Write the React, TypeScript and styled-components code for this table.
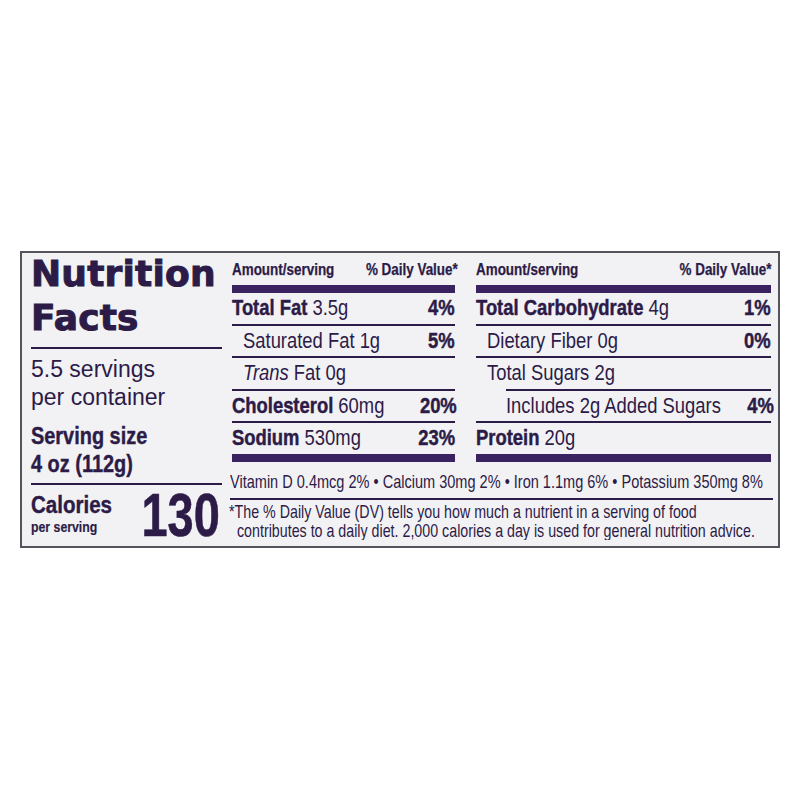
import React from "react";
import styled, { createGlobalStyle } from "styled-components";

const INK = "#2c1b47";
const BAR = "#3a2160";
const SANS = `"Liberation Sans", Arial, sans-serif`;
const HEAVY = `"DejaVu Sans", "Liberation Sans", Arial, sans-serif`;

const Global = createGlobalStyle`
  html, body { margin: 0; padding: 0; background: #ffffff; overflow: hidden; }
  body { font-family: ${SANS}; color: ${INK}; }
`;

const Page = styled.main`
  box-sizing: border-box;
  width: 800px;
  height: 800px;
  padding: 251px 0 0 20px;
`;

const Label = styled.section`
  box-sizing: border-box;
  width: 760px;
  height: 297px;
  border: 2px solid #55535c;
  background: #f2f2f5;
  display: grid;
  grid-template-columns: 191px minmax(0, 1fr);
  column-gap: 10px;
  padding: 0 5px 0 9px;
  overflow: hidden;
`;

/* horizontally condensed text (the label uses a condensed face) */
const Cond = styled.span<{ $k: number; $right?: boolean }>`
  display: inline-block;
  flex: 0 1 auto;
  min-width: 0;
  white-space: nowrap;
  transform: scaleX(${(p) => p.$k});
  transform-origin: ${(p) => (p.$right ? "right" : "left")} center;
`;

const Side = styled.div`
  display: flex;
  flex-direction: column;
  min-width: 0;
`;

const Title = styled.h1`
  margin: -1px 0 0;
  font-family: ${HEAVY};
  font-weight: 700;
  font-size: 36px;
  line-height: 44px;
  letter-spacing: 0.2px;
  color: ${INK};
  -webkit-text-stroke: 1px ${INK};
`;

const Rule = styled.hr<{ $top: number }>`
  margin: ${(p) => p.$top}px 0 0;
  border: 0;
  height: 2px;
  background: ${INK};
`;

const Servings = styled.p<{ $top: number }>`
  margin: ${(p) => p.$top}px 0 0;
  font-weight: 400;
  font-size: 23px;
  line-height: 28px;
`;

const ServingSize = styled.p<{ $top: number }>`
  display: flex;
  flex-direction: column;
  margin: ${(p) => p.$top}px 0 0;
  font-weight: 700;
  font-size: 24px;
  line-height: 28px;
  -webkit-text-stroke: 0.4px ${INK};
`;

const CalRow = styled.div`
  display: flex;
  justify-content: space-between;
  align-items: flex-start;
`;

const CalStack = styled.div`
  display: flex;
  flex-direction: column;
  flex: 0 1 auto;
  min-width: 0;
  padding-top: 7px;
  font-weight: 700;
  -webkit-text-stroke: 0.4px ${INK};
`;

const CalWord = styled.div`
  font-size: 24px;
  line-height: 26px;
`;

const PerServing = styled.div`
  font-size: 15px;
  line-height: 18px;
  -webkit-text-stroke: 0.2px ${INK};
`;

const BigNum = styled.div`
  flex: 0 0 auto;
  font-weight: 700;
  font-size: 61px;
  line-height: 60px;
  margin-right: 2px;
  -webkit-text-stroke: 0.6px ${INK};
`;

const Main = styled.div`
  display: flex;
  flex-direction: column;
  min-width: 0;
`;

const Columns = styled.div`
  display: grid;
  grid-template-columns: 223px minmax(0, 1fr);
  column-gap: 21px;
  padding-right: 2px;
`;

const Col = styled.div`
  display: flex;
  flex-direction: column;
  min-width: 0;
`;

const Head = styled.div`
  display: flex;
  justify-content: space-between;
  padding-top: 7px;
  font-weight: 700;
  font-size: 16px;
  line-height: 20px;
  -webkit-text-stroke: 0.25px ${INK};
`;

const Bar = styled.div<{ $top: number }>`
  margin-top: ${(p) => p.$top}px;
  height: 8px;
  background: ${BAR};
`;

const Row = styled.div<{ $indent?: number; $first?: boolean; $shift?: number }>`
  display: flex;
  justify-content: space-between;
  align-items: center;
  height: 30.5px;
  margin-left: ${(p) => p.$shift ?? 0}px;
  padding-left: ${(p) => p.$indent ?? 0}px;
  border-top: ${(p) => (p.$first ? "0" : `2px solid ${INK}`)};
  font-size: 22.5px;
  line-height: 26px;
  white-space: nowrap;
`;

const B = styled.b`
  font-weight: 700;
  -webkit-text-stroke: 0.45px ${INK};
`;

const I = styled.i`
  font-style: italic;
`;

const Vitamins = styled.p`
  margin: 9px 0 0 -2px;
  padding-bottom: 5px;
  border-bottom: 2px solid ${INK};
  font-size: 19px;
  line-height: 22px;
  white-space: nowrap;
  overflow: hidden;
`;

const Foot = styled.p`
  display: flex;
  flex-direction: column;
  margin: 2px 0 0 -3px;
  font-size: 18.5px;
  line-height: 19px;
  overflow: hidden;
`;

const FootLine = styled.span<{ $indent?: number }>`
  padding-left: ${(p) => p.$indent ?? 0}px;
`;

type Item = {
  bold?: string;
  italic?: string;
  text: string;
  pct?: string;
  indent?: number;
  shift?: number;
};

const left: Item[] = [
  { bold: "Total Fat", text: " 3.5g", pct: "4%" },
  { text: "Saturated Fat 1g", pct: "5%", indent: 11 },
  { italic: "Trans", text: " Fat 0g", indent: 11 },
  { bold: "Cholesterol", text: " 60mg", pct: "20%" },
  { bold: "Sodium", text: " 530mg", pct: "23%" },
];

const right: Item[] = [
  { bold: "Total Carbohydrate", text: " 4g", pct: "1%" },
  { text: "Dietary Fiber 0g", pct: "0%", indent: 11 },
  { text: "Total Sugars 2g", indent: 11 },
  { text: "Includes 2g Added Sugars", pct: "4%", shift: 30 },
  { bold: "Protein", text: " 20g" },
];

const K_ROW = 0.818;

function Column({ items }: { items: Item[] }) {
  return (
    <Col>
      <Head>
        <Cond $k={0.84}>Amount/serving</Cond>
        <Cond $k={0.84} $right>
          % Daily Value*
        </Cond>
      </Head>
      <Bar $top={5} />
      {items.map((it, i) => (
        <Row key={i} $first={i === 0} $indent={it.indent} $shift={it.shift}>
          <Cond $k={K_ROW}>
            {it.bold && <B>{it.bold}</B>}
            {it.italic && <I>{it.italic}</I>}
            {it.text}
          </Cond>
          {it.pct && (
            <Cond $k={K_ROW} $right>
              <B>{it.pct}</B>
            </Cond>
          )}
        </Row>
      ))}
      <Bar $top={0} />
    </Col>
  );
}

export default function App() {
  return (
    <Page>
      <Global />
      <Label>
        <Side>
          <Title>
            Nutrition
            <br />
            Facts
          </Title>
          <Rule $top={7} />
          <Servings $top={6}>
            5.5 servings
            <br />
            per container
          </Servings>
          <ServingSize $top={11}>
            <Cond $k={0.83}>Serving size</Cond>
            <Cond $k={0.83}>4 oz (112g)</Cond>
          </ServingSize>
          <Rule $top={5} />
          <CalRow>
            <CalStack>
              <CalWord>
                <Cond $k={0.855}>Calories</Cond>
              </CalWord>
              <PerServing>
                <Cond $k={0.82}>per serving</Cond>
              </PerServing>
            </CalStack>
            <BigNum>
              <Cond $k={0.77} $right>
                130
              </Cond>
            </BigNum>
          </CalRow>
        </Side>
        <Main>
          <Columns>
            <Column items={left} />
            <Column items={right} />
          </Columns>
          <Vitamins>
            <Cond $k={0.765}>
              Vitamin D 0.4mcg 2% • Calcium 30mg 2% • Iron 1.1mg 6% • Potassium 350mg 8%
            </Cond>
          </Vitamins>
          <Foot>
            <FootLine>
              <Cond $k={0.77}>
                *The % Daily Value (DV) tells you how much a nutrient in a serving of food
              </Cond>
            </FootLine>
            <FootLine $indent={8}>
              <Cond $k={0.77}>
                contributes to a daily diet. 2,000 calories a day is used for general
                nutrition advice.
              </Cond>
            </FootLine>
          </Foot>
        </Main>
      </Label>
    </Page>
  );
}
